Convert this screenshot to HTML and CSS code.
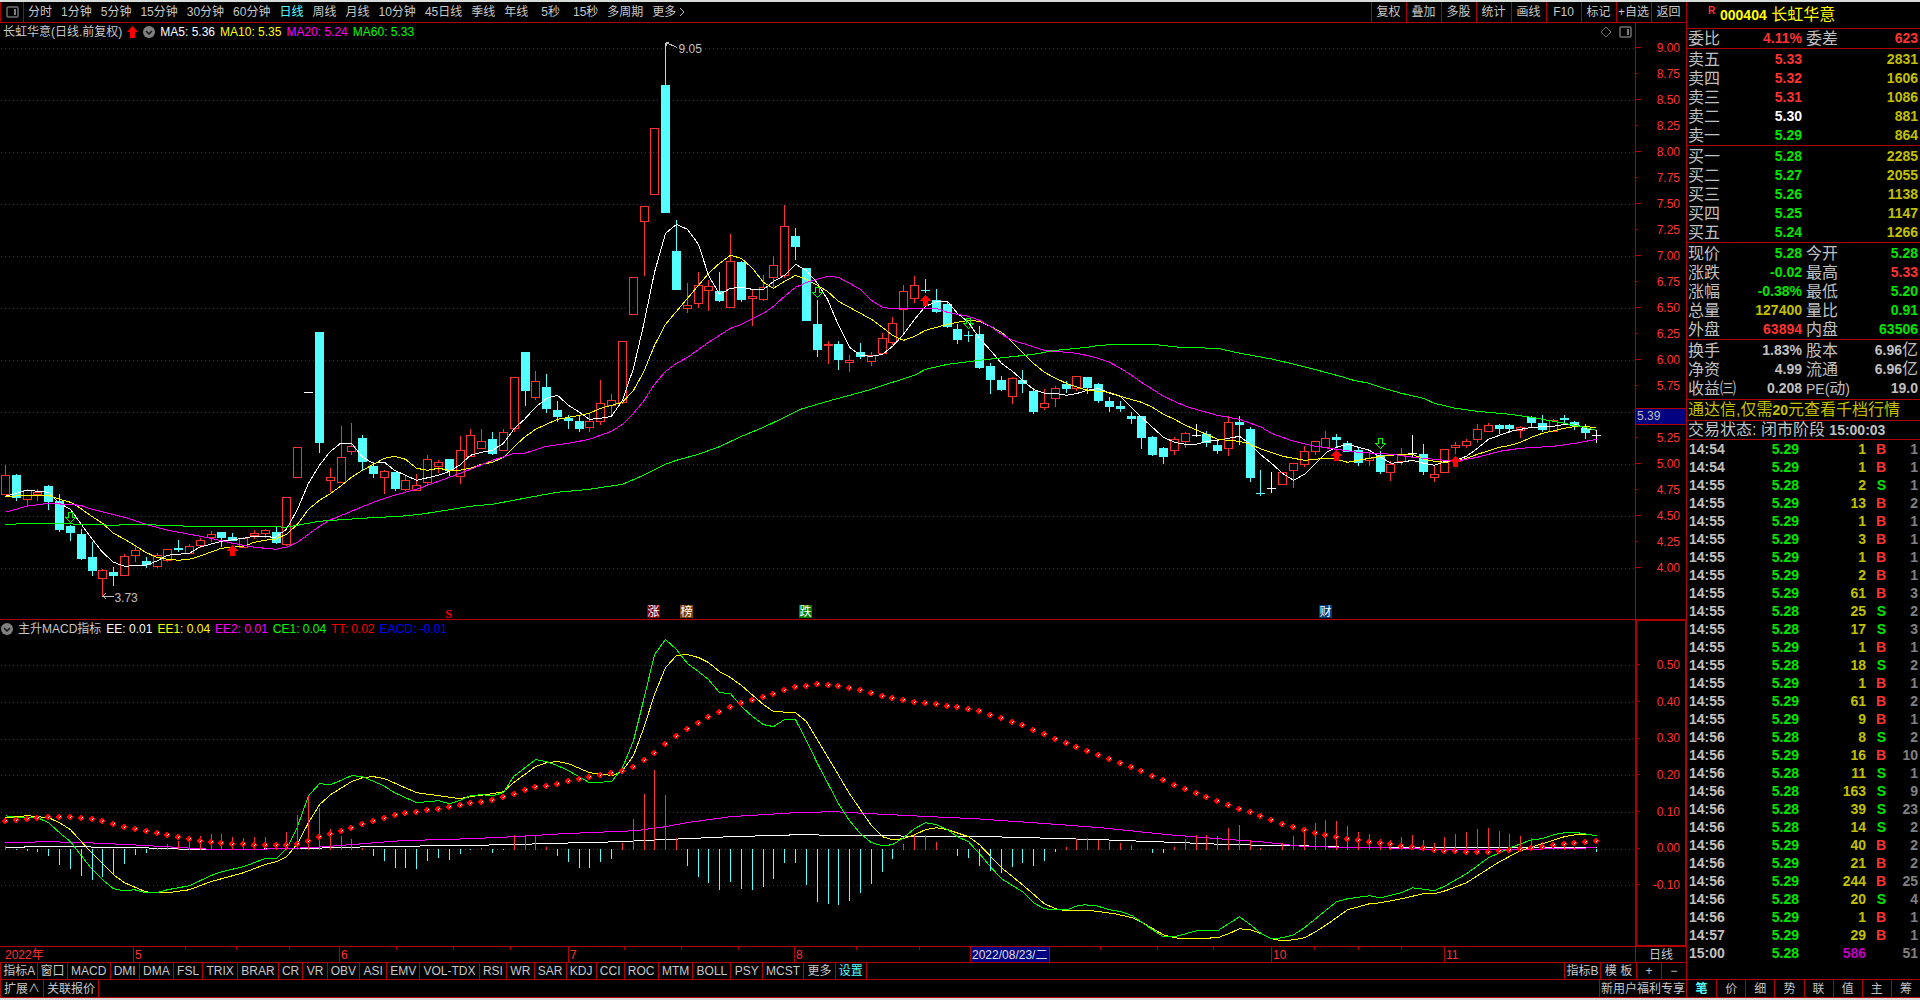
FILE: index.html
```html
<!DOCTYPE html>
<html lang="zh-CN">
<head>
<meta charset="utf-8">
<title>长虹华意 000404</title>
<link rel="stylesheet" href="styles.css">
</head>
<body>
<div class="app">
  <main class="main">
    <nav class="menu">
      <button class="menu-icon" aria-label="侧栏"><svg width="13" height="12" viewBox="0 0 13 12"><rect x="1" y="1" width="11" height="10" rx="1" fill="none" stroke="#707070" stroke-width="1.5"/><rect x="8" y="3" width="2" height="6" fill="#808080"/></svg></button>
      <div class="periods">
        <button>分时</button><button>1分钟</button><button>5分钟</button><button>15分钟</button><button>30分钟</button><button>60分钟</button><button class="on">日线</button><button>周线</button><button>月线</button><button>10分钟</button><button>45日线</button><button>季线</button><button>年线</button><button class="sec">5秒</button><button class="sec">15秒</button><button>多周期</button><button class="more">更多<svg width="6" height="10" viewBox="0 0 6 10"><path d="M1 1l4 4-4 4" fill="none" stroke="#c8c8c8"/></svg></button>
      </div>
      <div class="tools">
        <button>复权</button><button>叠加</button><button>多股</button><button>统计</button><button>画线</button><button>F10</button><button>标记</button><button>+自选</button><button>返回</button>
      </div>
    </nav>

    <section class="pane price">
      <div class="plot">
        <svg id="price" class="canvas" viewBox="0 23 1635 596" preserveAspectRatio="none"></svg>
        <div class="legend">
          <span>长虹华意(日线.前复权)</span>
          <svg width="11" height="12" viewBox="0 0 11 12"><path d="M5.5 0L11 6H8v6H3V6H0z" fill="#f00"/></svg>
          <svg width="12" height="12" viewBox="0 0 12 12"><circle cx="6" cy="6" r="6" fill="#808080"/><path d="M3 5l3 3 3-3" fill="none" stroke="#111" stroke-width="1.5"/></svg>
          <span class="white">MA5: 5.36</span><span class="yellow">MA10: 5.35</span><span class="magenta">MA20: 5.24</span><span class="lime">MA60: 5.33</span>
        </div>
        <div class="corner">
          <svg width="12" height="12" viewBox="0 0 12 12"><path d="M6 1l5 5-5 5-5-5z" fill="none" stroke="#707070"/></svg>
          <svg width="13" height="12" viewBox="0 0 13 12"><rect x="1" y="1" width="11" height="10" rx="1" fill="none" stroke="#707070" stroke-width="1.5"/><rect x="8" y="3" width="2" height="6" fill="#808080"/></svg>
        </div>
        <span class="pin" style="left:41.5%;top:4.4%">9.05</span>
        <span class="pin" style="left:7%;top:96.5%">3.73</span>
        <span class="flag s" style="left:27.4%">S</span>
        <span class="flag up" style="left:39.94%">涨</span>
        <span class="flag list" style="left:41.96%">榜</span>
        <span class="flag down" style="left:49.24%">跌</span>
        <span class="flag fin" style="left:81.04%">财</span>
      </div>
      <ol class="axis axis-price">
        <li>9.00</li><li>8.75</li><li>8.50</li><li>8.25</li><li>8.00</li><li>7.75</li><li>7.50</li><li>7.25</li><li>7.00</li><li>6.75</li><li>6.50</li><li>6.25</li><li>6.00</li><li>5.75</li><li class="cursor"><b>5.39</b></li><li>5.25</li><li>5.00</li><li>4.75</li><li>4.50</li><li>4.25</li><li>4.00</li>
      </ol>
    </section>

    <section class="pane macd">
      <div class="plot">
        <svg id="macd" class="canvas" viewBox="0 620 1635 326" preserveAspectRatio="none"></svg>
        <div class="legend ind">
          <svg width="12" height="12" viewBox="0 0 12 12"><circle cx="6" cy="6" r="6" fill="#808080"/><path d="M3 5l3 3 3-3" fill="none" stroke="#111" stroke-width="1.5"/></svg>
          <span>主升MACD指标</span><span class="white">EE: 0.01</span><span class="yellow">EE1: 0.04</span><span class="magenta">EE2: 0.01</span><span class="lime">CE1: 0.04</span><span class="red">TT: 0.02</span><span class="blue">EACD: -0.01</span>
        </div>
      </div>
      <ol class="axis axis-macd">
        <li>0.50</li><li>0.40</li><li>0.30</li><li>0.20</li><li>0.10</li><li>0.00</li><li>-0.10</li>
      </ol>
    </section>

    <div class="dates">
      <div class="months">
        <svg class="marks" viewBox="0 0 1635 3" preserveAspectRatio="none"><path d="M185.5 0v3M236.5 0v3M289.5 0v3M396.5 0v3M453.5 0v3M510.5 0v3M624.5 0v3M681.5 0v3M738.5 0v3M856.5 0v3M919.5 0v3M1100.5 0v3M1157.5 0v3M1213.5 0v3M1314.5 0v3M1358.5 0v3M1401.5 0v3"/></svg>
        <span class="year">2022年</span><span>5</span><span>6</span><span>7</span><span>8</span><span class="day">2022/08/23/二</span><span></span><span>10</span><span>11</span>
      </div>
      <span class="period">日线</span>
    </div>

    <div class="row indicators">
      <div class="btns">
        <button class="tight">指标A</button><button class="tight">窗口</button><button>MACD</button><button>DMI</button><button>DMA</button><button>FSL</button><button>TRIX</button><button>BRAR</button><button>CR</button><button>VR</button><button>OBV</button><button>ASI</button><button>EMV</button><button>VOL-TDX</button><button>RSI</button><button>WR</button><button>SAR</button><button>KDJ</button><button>CCI</button><button>ROC</button><button>MTM</button><button>BOLL</button><button>PSY</button><button>MCST</button><button>更多</button><button class="on">设置</button>
      </div>
      <div class="right">
        <button class="cell">指标B</button><button class="cell">模 板</button><button class="zoom">+</button><button class="zoom">−</button>
      </div>
    </div>
    <div class="row extra">
      <div class="btns"><button>扩展∧</button><button>关联报价</button></div>
      <div class="right"><button class="promo">新用户福利专享</button></div>
    </div>
  </main>

  <aside class="side">
    <h1 class="name"><sup>R</sup><b>000404</b> 长虹华意</h1>
    <table class="quote single">
      <tr><th>委比</th><td class="r">4.11%</td><th>委差</th><td class="r">623</td></tr>
    </table>
    <table class="quote">
      <tr><th>卖五</th><td class="r">5.33</td><th></th><td class="y">2831</td></tr>
      <tr><th>卖四</th><td class="r">5.32</td><th></th><td class="y">1606</td></tr>
      <tr><th>卖三</th><td class="r">5.31</td><th></th><td class="y">1086</td></tr>
      <tr><th>卖二</th><td class="w">5.30</td><th></th><td class="y">881</td></tr>
      <tr><th>卖一</th><td class="g">5.29</td><th></th><td class="y">864</td></tr>
    </table>
    <table class="quote">
      <tr><th>买一</th><td class="g">5.28</td><th></th><td class="y">2285</td></tr>
      <tr><th>买二</th><td class="g">5.27</td><th></th><td class="y">2055</td></tr>
      <tr><th>买三</th><td class="g">5.26</td><th></th><td class="y">1138</td></tr>
      <tr><th>买四</th><td class="g">5.25</td><th></th><td class="y">1147</td></tr>
      <tr><th>买五</th><td class="g">5.24</td><th></th><td class="y">1266</td></tr>
    </table>
    <table class="quote">
      <tr><th>现价</th><td class="g">5.28</td><th>今开</th><td class="g">5.28</td></tr>
      <tr><th>涨跌</th><td class="g">-0.02</td><th>最高</th><td class="r">5.33</td></tr>
      <tr><th>涨幅</th><td class="g">-0.38%</td><th>最低</th><td class="g">5.20</td></tr>
      <tr><th>总量</th><td class="y">127400</td><th>量比</th><td class="g">0.91</td></tr>
      <tr><th>外盘</th><td class="r">63894</td><th>内盘</th><td class="g">63506</td></tr>
    </table>
    <table class="quote fin-table">
      <tr><th>换手</th><td>1.83%</td><th>股本</th><td>6.96<i>亿</i></td></tr>
      <tr><th>净资</th><td>4.99</td><th>流通</th><td>6.96<i>亿</i></td></tr>
      <tr><th>收益㈢</th><td>0.208</td><th><small>PE(</small>动<small>)</small></th><td>19.0</td></tr>
    </table>
    <p class="ad">通达信,仅需<b>20</b>元查看千档行情</p>
    <p class="state">交易状态: 闭市阶段 <b>15:00:03</b></p>
    <div class="ticks">
      <table>
        <tbody id="ticks"></tbody>
      </table>
    </div>
    <nav class="tabs">
      <button class="on">笔</button><button>价</button><button>细</button><button>势</button><button>联</button><button>值</button><button>主</button><button>筹</button>
    </nav>
  </aside>
</div>
<script src="chart.js"></script>
</body>
</html>
```
FILE: styles.css
```css
* { box-sizing: border-box; }

body {
  margin: 0;
  background: #000;
  color: #c8c8c8;
  font: 12px/16px "Liberation Sans", "Noto Sans CJK SC", sans-serif;
}

button {
  margin: 0;
  padding: 0;
  border: 0;
  background: none;
  color: inherit;
  font: inherit;
  white-space: nowrap;
}

p, h1, ol { margin: 0; padding: 0; }

.app {
  display: flex;
  min-height: 100vh;
  border-top: 2px solid #d8dcd8;
  border-bottom: 2px solid #d8dcd8;
}

.main {
  flex: 1;
  min-width: 0;
  display: flex;
  flex-direction: column;
}

.white { color: #fff; }
.yellow { color: #ff0; }
.magenta { color: #f0f; }
.lime { color: #0f0; }
.red { color: #f00; }
.blue { color: #00f; }
.on { color: #54ffff; }

/* top menu */
.menu {
  display: flex;
  height: 21px;
  border-bottom: 1px solid #b00000;
}
.menu-icon {
  width: 24px;
  display: flex;
  align-items: center;
  justify-content: center;
  border-left: 1px solid #b00000;
  border-right: 1px solid #b00000;
}
.periods {
  flex: 1;
  display: flex;
  gap: 9px;
  padding-left: 4px;
}
.periods .sec { padding-left: 4px; }
.periods .more {
  display: flex;
  align-items: center;
  gap: 3px;
}
.tools { display: flex; }
.tools button {
  width: 35px;
  padding-right: 1px;
  border-left: 1px solid #b00000;
}

/* chart panes */
.pane {
  display: flex;
  min-height: 0;
}
.price { flex: 597 1 0; border-bottom: 1px solid #b00000; }
.macd { flex: 327 1 0; border-bottom: 1px solid #b00000; }
.plot {
  position: relative;
  flex: 1;
  min-width: 0;
}
.canvas {
  position: absolute;
  inset: 0;
  width: 100%;
  height: 100%;
  shape-rendering: crispEdges;
}
.canvas * { vector-effect: non-scaling-stroke; }

.legend {
  position: absolute;
  left: 3px;
  top: 1px;
  display: flex;
  align-items: center;
  gap: 5px;
}
.ind { left: 1px; }
.corner {
  position: absolute;
  right: 3px;
  top: 3px;
  display: flex;
  gap: 7px;
}
.pin {
  position: absolute;
  transform: translateY(-50%);
  color: #c0c0c0;
}
.flag {
  position: absolute;
  bottom: 1px;
  width: 13px;
  height: 13px;
  margin-left: -6px;
  color: #fff;
  line-height: 14px;
  text-align: center;
}
.flag.s { color: #f00; font: bold 12px/8px "Liberation Serif", serif; height: 8px; }
.flag.up { background: #800000; }
.flag.list { background: #804000; }
.flag.down { background: #008000; }
.flag.fin { background: #003c78; }

/* value axes */
.axis {
  width: 51px;
  display: flex;
  flex-direction: column;
  list-style: none;
  color: #ff3232;
  border-left: 1px solid #b00000;
}
.axis li {
  display: flex;
  align-items: center;
  justify-content: space-between;
  min-height: 0;
  padding-right: 6px;
}
.axis li::before {
  content: "";
  width: 5px;
  height: 1px;
  background: #b00000;
}
.axis-price::before { content: ""; flex: 12 1 0; }
.axis-price::after { content: ""; flex: 38 1 0; }
.axis-price li { flex: 26 1 0; }
.axis-price li:nth-child(even)::before { width: 2px; }
.axis-price .cursor {
  align-items: flex-end;
  padding: 0;
}
.axis-price .cursor::before { display: none; }
.cursor b {
  flex: 1;
  padding-left: 1px;
  border: solid #b00000;
  border-width: 1px 0;
  background: #000080;
  color: #c0c0c0;
  font-weight: normal;
  line-height: 15px;
}
.axis-macd {
  border: 2px solid #b00000;
  border-width: 1px 1px 1px 2px;
}
.axis-macd::before { content: ""; flex: 26 1 0; }
.axis-macd::after { content: ""; flex: 42 1 0; }
.axis-macd li { flex: 37 1 0; padding-right: 5px; }
.axis-macd li::before { width: 3px; }

/* date scale */
.dates {
  display: flex;
  height: 16px;
  border-bottom: 1px solid #b00000;
  color: #ff3232;
  line-height: 17px;
}
.months {
  position: relative;
  flex: 1;
  display: grid;
  grid-template-columns: 133fr 206fr 229fr 226fr 176fr 79fr 222fr 173fr 191fr;
  grid-template-rows: 15px;
}
.months span {
  padding-left: 1px;
  border-left: 1px solid #b00000;
}
.months .year { padding-left: 5px; border-left: 0; }
.months .day {
  background: #000080;
  color: #e0e0e0;
  white-space: nowrap;
}
.marks {
  position: absolute;
  width: 100%;
  height: 3px;
  stroke: #b00000;
  shape-rendering: crispEdges;
}
.period {
  width: 51px;
  border-left: 1px solid #b00000;
  color: #c8c8c8;
  text-align: center;
}

/* bottom button rows */
.row {
  display: flex;
  justify-content: space-between;
  border-bottom: 1px solid #b00000;
  border-left: 1px solid #b00000;
}
.row button {
  height: 16px;
  line-height: 17px;
}
.btns, .right { display: flex; }
.btns button {
  padding: 0 3px;
  border-right: 1px solid #b00000;
}
.btns .tight { padding: 0 2px; }
.indicators .btns { width: 51.4%; }
.indicators .btns button { flex: 1 0 auto; }
.right button { border-left: 1px solid #b00000; }
.right .cell { width: 36px; }
.right .zoom { width: 25px; }
.row.extra button { height: 17px; line-height: 19px; }
.extra .promo { width: 87px; }

/* quote panel */
.side {
  width: 234px;
  display: flex;
  flex-direction: column;
  border-left: 1px solid #b00000;
  color: #c0c0c0;
}
.name {
  height: 27px;
  padding-left: 21px;
  border-bottom: 1px solid #b00000;
  color: #ff0;
  font-size: 16px;
  font-weight: normal;
  line-height: 26px;
}
.name b { font-size: 14px; }
.name sup {
  display: inline-block;
  width: 12px;
  color: #ff3232;
  font: bold 10px/10px "Liberation Sans", sans-serif;
}
.quote {
  width: 100%;
  table-layout: fixed;
  border-collapse: separate;
  border-spacing: 0;
  border-bottom: 1px solid #b00000;
  padding-top: 1px;
}
.single { padding-top: 0; }
.fin-table { padding-bottom: 1px; }
.quote th, .quote td {
  height: 19px;
  padding: 0;
  line-height: 19px;
  white-space: nowrap;
}
.quote th {
  width: 50px;
  padding-left: 1px;
  font-size: 16px;
  font-weight: normal;
  text-align: left;
}
.quote th + td { width: 65px; }
.quote th small { font-size: 14px; line-height: 0; }
.quote td {
  font-size: 14px;
  font-weight: bold;
  text-align: right;
}
.quote td + th { padding-left: 4px; }
.quote td:last-child { width: auto; padding-right: 2px; }
.quote i { font-size: 16px; font-style: normal; font-weight: normal; line-height: 0; }
.side .r { color: #ff3232; }
.side .g { color: #00e600; }
.side .y { color: #c0c000; }
.side .w { color: #fff; }
.side .m { color: #c000c0; }
.ad, .state {
  padding-left: 1px;
  border-bottom: 1px solid #b00000;
  font-size: 16px;
  white-space: nowrap;
}
.ad { height: 21px; line-height: 19px; color: #c0c000; }
.state { height: 19px; line-height: 18px; }
.ad b, .state b { font-size: 14px; line-height: 0; }

.ticks { flex: 1; }
.ticks table {
  width: 100%;
  table-layout: fixed;
  border-collapse: collapse;
  font: bold 14px/18px "Liberation Sans", sans-serif;
}
.ticks td {
  height: 18px;
  padding: 0;
  text-align: right;
}
.ticks td:nth-child(1) { width: 50px; padding-left: 2px; text-align: left; }
.ticks td:nth-child(2) { width: 62px; }
.ticks td:nth-child(3) { width: 67px; }
.ticks td:nth-child(4) { width: 20px; }
.ticks td:nth-child(5) { padding-right: 2px; color: #808080; }

.tabs {
  display: grid;
  grid-template-columns: repeat(8, 1fr);
  border-top: 1px solid #b00000;
  border-bottom: 1px solid #b00000;
}
.tabs button { height: 17px; line-height: 18px; }
.tabs button + button { border-left: 1px solid #b00000; }
.tabs .on { font-weight: bold; }
```
FILE: chart.js
```js
const RED = '#ff3232', CYAN = '#54ffff', WHITE = '#ffffff', GRID = '#b00000';
const barX = i => Math.round(5 + i * 10.823);

// one bar per entry: kind (r up, c down, w flat), high, body top, body bottom, low
const bars = `r465,475,495,495 c474,475,498,501 r489,490,500,507 r489,492,495,501 c485,486,502,510 c494,501,530,532
c525,526,533,541 c529,534,559,560 c542,557,571,576 r569,570,579,596 c567,572,576,586 r554,556,576,576 r545,550,556,562
c557,561,565,568 r553,555,567,568 r549,549,561,562 c540,548,550,552 r544,546,554,554 r538,540,546,548 r531,534,538,542
c532,532,538,547 c533,537,541,541 r537,538,548,548 r530,533,536,539 r529,530,534,538 c527,532,543,544 r497,497,545,546
r447,447,478,478 w392,392,393,393 c332,332,443,453 r468,477,481,492 r426,457,483,483 r423,446,452,455 c435,438,462,470
c462,466,474,478 r470,471,478,494 c472,472,489,491 r475,480,490,491 r474,485,491,491 r455,459,483,485 r460,462,467,473
c459,459,471,476 r436,450,477,484 r429,435,457,457 r429,441,449,449 c432,439,454,455 r429,432,451,451 r377,377,429,432
c352,352,391,406 r371,381,398,400 c374,387,409,413 c401,410,417,422 c415,418,421,429 c415,421,429,432 r413,421,428,432
r380,403,422,425 r394,400,406,417 r341,341,403,404 r277,277,315,315 r206,206,222,276 r128,128,195,195 c43,85,213,213
c220,251,290,290 r283,305,309,313 r272,285,304,308 r280,286,291,311 c272,291,301,302 r234,261,308,308 c261,262,300,302
r290,296,299,326 r275,287,300,301 r256,265,278,287 r205,226,276,278 c228,236,247,260 c268,268,321,321 c300,324,350,357
r341,344,346,364 c341,344,360,370 r355,360,363,372 c343,352,357,359 r352,355,362,366 r333,338,354,354 r317,323,343,345
r285,291,310,335 r276,285,299,303 c279,290,291,293 c289,300,312,313 c302,304,327,328 c324,329,340,344 c331,335,336,342
c326,334,368,369 c363,366,380,394 c376,380,390,391 r377,378,397,404 c370,380,384,393 c388,391,412,414 r389,403,408,410
r386,388,399,407 c381,384,389,393 r376,376,389,391 c377,377,388,394 c383,384,401,403 c397,401,407,412 c401,406,409,412
c412,416,419,424 c416,416,438,449 c436,437,455,456 c447,448,457,464 r437,439,451,455 r432,433,442,448 w424,435,436,437
c431,434,443,447 c439,445,451,454 r416,422,449,456 c416,422,425,445 c427,429,478,482 c470,493,494,496 w472,488,489,493
r472,472,485,485 r463,463,471,488 r446,451,465,467 r441,441,452,455 r431,438,448,448 c434,437,440,448 c441,443,452,452
c448,450,463,466 r453,458,461,466 c451,455,472,474 r461,464,473,481 r448,455,462,465 w435,453,454,457 c444,454,472,475
r466,474,478,482 r449,449,473,473 r442,445,448,454 r439,441,446,448 r424,429,440,443 r423,425,432,432 c424,425,429,434
c424,425,429,433 r426,427,431,438 c416,417,423,427 c415,423,430,432 r419,420,432,432 c415,418,420,423 c421,422,426,430
c424,428,433,439 w430,435,436,443`.split(/\s+/);

const ma5 = '5,496 16,493 26,490 48,492 59,503 70,509 80,523 91,538 102,552 113,562 124,566 145,565 156,561 167,555 189,553 199,547 210,544 221,541 243,538 254,536 275,537 286,529 297,509 308,483 319,465 329,452 340,443 351,443 362,457 373,463 384,462 394,470 405,475 416,480 438,475 449,471 459,465 470,455 481,452 492,450 503,443 514,428 524,419 535,407 546,398 557,395 568,405 579,412 589,419 600,418 611,416 622,400 633,368 643,325 654,272 665,233 676,224 687,229 698,244 708,275 719,294 730,288 741,287 752,289 763,289 773,281 784,275 795,264 806,270 817,283 827,299 838,325 849,347 860,355 871,356 882,354 892,346 903,334 914,319 925,306 936,301 947,301 957,313 968,322 979,338 990,350 1001,363 1012,371 1022,380 1033,389 1044,393 1055,393 1066,395 1077,393 1087,390 1098,388 1109,393 1120,396 1131,407 1141,417 1152,427 1163,437 1174,442 1185,444 1196,444 1206,441 1217,440 1239,436 1250,444 1261,455 1271,463 1282,473 1293,480 1304,474 1315,463 1326,452 1336,447 1347,444 1369,450 1380,457 1391,463 1401,462 1412,460 1423,463 1434,465 1445,461 1455,460 1466,456 1477,448 1488,439 1499,435 1510,431 1531,427 1553,426 1564,424 1575,424 1585,428 1596,430';
const ma10 = '5,496 48,495 59,499 70,502 80,508 91,516 102,523 113,533 124,539 134,545 145,552 156,557 167,559 178,560 189,559 199,556 210,552 221,548 243,546 254,542 264,540 275,539 286,534 297,524 308,509 319,500 329,494 340,486 351,477 362,470 373,464 384,458 394,456 405,459 416,468 427,470 438,468 449,470 459,470 470,468 481,464 492,462 503,457 514,446 524,437 535,429 546,424 557,419 568,417 579,415 589,413 600,408 611,405 622,402 633,390 643,372 654,345 665,324 676,311 687,298 698,285 708,273 719,263 730,255 741,258 752,268 763,282 773,288 784,281 795,275 806,279 817,285 827,291 838,301 849,307 860,313 871,319 882,327 892,335 903,340 914,336 925,330 936,327 947,324 957,322 968,320 979,321 990,326 1001,332 1012,342 1022,352 1033,363 1044,372 1055,378 1066,383 1077,387 1087,390 1109,392 1120,396 1141,402 1152,407 1163,414 1174,419 1185,425 1206,434 1217,439 1239,441 1250,444 1261,449 1282,456 1304,460 1326,458 1336,459 1347,462 1358,460 1369,458 1380,456 1401,454 1412,454 1423,459 1434,461 1445,462 1455,461 1466,458 1477,454 1499,447 1510,445 1520,442 1531,437 1542,433 1564,428 1575,426 1596,427';
const ma20 = '5,512 26,506 48,503 80,505 91,509 124,517 145,524 167,530 189,534 210,538 232,543 254,547 275,549 286,547 297,542 319,526 329,520 351,511 373,502 394,495 416,489 449,477 470,469 492,460 514,453 524,453 546,446 568,443 589,439 611,431 622,424 633,413 643,401 654,384 665,371 676,363 687,357 708,342 730,328 741,324 763,313 773,306 784,296 795,287 806,282 827,276 838,277 849,283 860,289 871,300 882,307 889,308 936,308 947,312 957,314 968,316 979,320 990,326 1001,334 1012,340 1022,343 1044,350 1066,352 1077,353 1098,358 1109,362 1120,368 1131,375 1141,382 1163,396 1185,406 1206,412 1217,415 1239,419 1250,423 1261,427 1271,433 1293,441 1315,446 1336,449 1358,452 1391,454 1412,457 1434,459 1455,461 1466,459 1477,457 1499,451 1520,448 1553,446 1575,443 1596,439';
const ma60 = '5,524 48,523 113,525 135,524 189,526 264,526 286,527 297,525 319,521 362,518 400,516 420,514 452,509 470,506 492,504 524,498 557,492 589,489 622,484 643,475 665,464 676,460 698,454 720,446 741,436 763,427 784,417 800,409 827,401 871,389 892,382 914,375 925,369 947,364 979,360 1033,354 1055,350 1087,347 1098,345 1120,344 1152,344 1180,347 1217,348 1240,353 1273,359 1310,368 1340,376 1353,380 1369,383 1380,387 1401,393 1423,398 1434,403 1455,408 1477,411 1510,414 1531,417 1553,421 1575,425 1596,430';

const ce1 = '5,815 16,817 37,817 48,822 59,832 70,841 80,854 91,868 102,879 113,888 124,890 134,889 145,892 156,892 167,889 189,885 210,875 221,871 243,866 264,858 276,858 286,848 297,826 308,795 319,783 330,784 340,780 351,775 362,776 383,785 394,792 416,802 438,800 449,803 459,800 470,795 481,794 492,795 503,792 513,776 535,759 546,761 557,765 568,770 589,782 611,781 622,767 633,740 643,700 654,654 665,639 676,649 687,663 698,671 708,679 719,692 730,693 741,706 752,716 763,724 773,726 784,719 795,719 806,740 817,763 827,782 838,803 849,820 860,833 871,842 882,845 892,844 903,837 914,828 925,822 936,824 947,829 957,836 968,841 979,853 990,866 1001,878 1022,891 1033,902 1044,908 1055,909 1067,909 1077,905 1084,904 1096,905 1109,909 1121,911 1132,915 1152,929 1163,936 1174,936 1196,930 1217,930 1228,923 1239,916 1250,924 1261,933 1271,938 1282,937 1293,934 1304,927 1326,909 1336,901 1347,898 1369,895 1380,897 1401,892 1412,887 1434,890 1445,885 1466,873 1488,857 1510,847 1531,839 1542,838 1553,834 1564,832 1577,832 1596,835';
const ee1 = '5,817 27,815 48,817 59,822 70,829 91,852 113,874 124,882 145,891 156,892 167,892 189,889 210,881 221,878 243,872 264,864 276,861 286,856 297,843 308,822 319,804 330,794 351,781 362,777 373,776 384,778 416,792 438,795 459,798 470,796 492,793 503,791 513,782 535,766 546,762 557,761 568,763 589,772 612,775 622,770 633,755 643,728 654,694 665,667 676,655 687,654 698,657 708,662 719,671 730,677 741,685 763,704 773,711 795,712 806,721 827,756 849,793 871,825 882,836 892,839 903,838 914,834 925,829 936,827 947,829 968,836 979,844 1001,867 1022,884 1044,903 1055,908 1066,910 1092,910 1114,913 1132,917 1142,922 1163,934 1174,937 1185,938 1217,937 1228,933 1239,928 1250,929 1261,933 1271,938 1282,940 1293,939 1304,937 1315,931 1326,924 1347,909 1369,903 1380,902 1401,898 1423,893 1434,893 1445,890 1466,882 1499,861 1520,850 1542,843 1564,836 1575,834 1590,834 1596,835';
const ee2 = '5,842 48,841 86,842 130,844 200,848 220,849 286,848 324,846 362,843 400,840 470,838 513,836 563,833 635,830 665,826 686,822 730,816 795,812 833,811 870,813 930,816 975,818 1060,824 1100,827 1168,834 1217,838 1260,841 1305,846 1380,847 1440,849 1500,849 1560,848 1596,847';
const ee = '5,847 32,846 70,846 140,847 200,849 290,848 335,847 370,846 510,844 540,843 620,841 660,839 685,838 730,836 800,834 860,835 990,836 1065,838 1100,839 1182,842 1230,844 1300,845 1360,847 1596,847';
const tt = '5,820 26,818 48,816 70,816 91,818 102,820 113,823 134,828 156,832 178,836 199,840 221,842 254,844 286,844 297,843 308,840 319,836 340,830 362,823 384,817 405,812 427,809 449,806 470,802 492,799 513,793 535,786 546,785 568,780 589,776 611,772 622,770 633,766 643,760 654,752 665,743 676,735 687,728 708,716 730,706 741,702 763,696 784,689 795,686 817,683 838,685 860,689 882,695 903,699 925,702 957,706 979,710 1001,717 1022,724 1044,733 1066,742 1077,746 1098,754 1120,762 1141,770 1163,779 1185,788 1206,796 1228,804 1250,811 1271,819 1293,826 1315,832 1336,836 1358,839 1380,842 1401,845 1423,847 1434,849 1466,851 1477,851 1500,850 1520,848 1542,846 1553,844 1575,842 1596,840';

// histogram tip of each bar; tips above the zero line are red
const hist = [846,850,851,852,856,865,869,876,880,877,875,864,855,853,848,844,841,839,836,834,834,837,838,837,837,844,832,815,796,808,829,836,839,848,856,861,868,868,869,861,858,860,854,850,848,853,850,835,835,836,847,856,862,868,868,862,859,843,819,794,770,795,838,866,877,883,890,882,889,890,887,879,863,863,885,902,904,905,901,893,884,872,859,844,835,835,842,849,856,858,866,871,873,867,863,866,861,852,847,839,838,840,842,843,845,849,853,853,847,839,835,835,836,828,825,840,848,849,843,836,830,823,820,821,826,832,834,839,840,837,835,840,843,837,834,832,829,828,831,834,836,838,842,844,846,847,849,852];
const ZERO = 849;

const grid = ys => ys.map(y => `<path d="M1 ${y}.5H1635" stroke="${GRID}" stroke-dasharray="1 3"/>`).join('');
const curve = (pts, color) => `<polyline points="${pts.replace(/(\d+),(\d+)/g, '$1.5,$2.5')}" fill="none" stroke="${color}"/>`;
const stem = (x, a, b, color) => b > a ? `<path d="M${x}.5 ${a}V${b}" stroke="${color}"/>` : '';

function bar(text, i) {
  const [hi, top, bot, lo] = text.slice(1).split(',').map(Number);
  const x = barX(i);
  const color = { r: RED, c: CYAN, w: WHITE }[text[0]];
  if (text[0] === 'r') {
    return stem(x, hi, top, color) + stem(x, bot, lo, color) +
      `<rect x="${x - 3.5}" y="${top + 0.5}" width="8" height="${bot - top - 1}" fill="none" stroke="${color}"/>`;
  }
  return stem(x, hi, lo, color) + `<rect x="${x - 4}" y="${top}" width="9" height="${bot - top}" fill="${color}"/>`;
}

const upArrow = (x, y) => `<path d="M${x + 0.5} ${y}l5.5 6h-3v5h-5v-5h-3z" fill="#f00"/>`;
const downArrow = (x, y) => `<path d="M${x - 1.5} ${y + 0.5}h4v5h3l-5 5-5-5h3z" fill="none" stroke="#0f0"/>`;

document.getElementById('price').innerHTML =
  grid([48, 100, 152, 204, 256, 308, 360, 412, 464, 516, 568]) +
  bars.map(bar).join('') +
  curve(ma5, WHITE) + curve(ma10, '#ff0') + curve(ma20, '#f0f') + curve(ma60, '#0f0') +
  [[232, 545], [925, 295], [1336, 450], [1455, 456]].map(p => upArrow(...p)).join('') +
  [[70, 512], [817, 287], [968, 318], [1380, 438]].map(p => downArrow(...p)).join('') +
  '<path d="M114 596.5H102M106 593.5l-3 3 3 3" fill="none" stroke="#c0c0c0"/>' +
  '<path d="M677 47.5l-11-5M669 42.5h-3v4" fill="none" stroke="#c0c0c0"/>';

function levelAt(x) {
  const pts = tt.split(' ').map(p => p.split(',').map(Number));
  let k = 1;
  while (k < pts.length - 1 && pts[k][0] < x) k++;
  const [a, b] = [pts[k - 1], pts[k]];
  return Math.round(a[1] + (b[1] - a[1]) * (x - a[0]) / (b[0] - a[0]));
}

document.getElementById('macd').innerHTML =
  grid([665, 702, 739, 775, 812, 849, 885]) +
  curve(ee, WHITE) + curve(ee2, '#f0f') + curve(ee1, '#ff0') + curve(ce1, '#0f0') +
  hist.map((y, i) => y < ZERO ? stem(barX(i), y, ZERO + 1, RED) : stem(barX(i), ZERO, y, CYAN)).join('') +
  hist.map((_, i) => {
    const x = barX(i), y = levelAt(x);
    return `<path d="M${x - 1} ${y - 2}h2v1h1v1h1v2h-1v1h-1v1h-2v-1h-1v-1h-1v-2h1v-1h1z" fill="#f00"/>` +
      `<path d="M${x + 1} ${y}h1v1h-1v1h-1v-1h1z" fill="#fff"/>`;
  }).join('');

// time, price, volume, side, order count
const ticks = `14:54 5.29 1 B 1|14:54 5.29 1 B 1|14:55 5.28 2 S 1|14:55 5.29 13 B 2|14:55 5.29 1 B 1|14:55 5.29 3 B 1|14:55 5.29 1 B 1|14:55 5.29 2 B 1|14:55 5.29 61 B 3|14:55 5.28 25 S 2|14:55 5.28 17 S 3|14:55 5.29 1 B 1|14:55 5.28 18 S 2|14:55 5.29 1 B 1|14:55 5.29 61 B 2|14:55 5.29 9 B 1|14:56 5.28 8 S 2|14:56 5.29 16 B 10|14:56 5.28 11 S 1|14:56 5.28 163 S 9|14:56 5.28 39 S 23|14:56 5.28 14 S 2|14:56 5.29 40 B 2|14:56 5.29 21 B 2|14:56 5.29 244 B 25|14:56 5.28 20 S 4|14:56 5.29 1 B 1|14:57 5.29 29 B 1|15:00 5.28 586 - 51`;
document.getElementById('ticks').innerHTML = ticks.split('|').map(row => {
  const [time, price, vol, side, count] = row.split(' ');
  const auction = side === '-';
  return `<tr><td>${time}</td><td class="g">${price}</td><td class="${auction ? 'm' : 'y'}">${vol}</td>` +
    `<td class="${side === 'B' ? 'r' : 'g'}">${auction ? '' : side}</td><td>${count}</td></tr>`;
}).join('');
```
